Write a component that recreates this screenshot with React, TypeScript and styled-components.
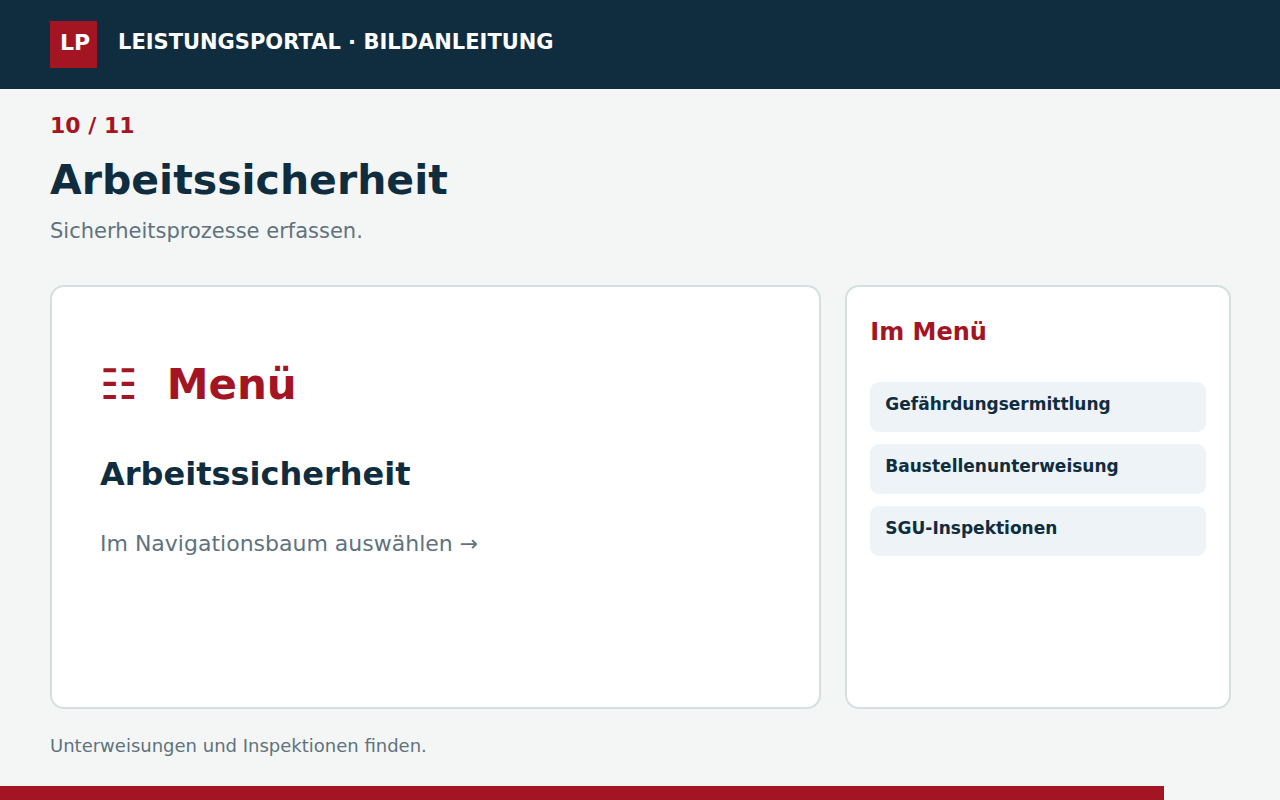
import React from "react";
import styled, { createGlobalStyle } from "styled-components";

const navy = "#102d40";
const red = "#a31522";
const slate = "#60727d";

const GlobalStyle = createGlobalStyle`
  * { box-sizing: border-box; }
  body { margin: 0; background: #f4f6f5; color: ${navy}; font-family: "DejaVu Sans", sans-serif; }
  h1, h2, h3, p, ul { margin: 0; padding: 0; }
`;

const Page = styled.div`
  min-height: 100vh;
  display: flex;
  flex-direction: column;
`;

const Header = styled.header`
  display: flex;
  align-items: center;
  gap: 21px;
  height: 89px;
  padding: 0 50px;
  background: ${navy};
  color: #fff;
  font-size: 22px;
  font-weight: 700;
  line-height: 26px;
`;

const Logo = styled.span`
  width: 47px;
  height: 47px;
  padding: 9px 10px;
  background: ${red};
`;

const HeaderTitle = styled.span`
  padding-bottom: 6px;
  font-size: 21px;
`;

const Main = styled.main`
  flex: 1;
  display: flex;
  flex-direction: column;
  padding: 24px 49px 29px 50px;
`;

const Counter = styled.p`
  color: ${red};
  font-size: 22px;
  font-weight: 700;
  line-height: 26px;
`;

const Title = styled.h1`
  margin-top: 16px;
  font-size: 41px;
  line-height: 50px;
`;

const Lead = styled.p`
  margin-top: 14px;
  color: ${slate};
  font-size: 21px;
  line-height: 24px;
`;

const Panels = styled.div`
  flex: 1;
  display: grid;
  grid-template-columns: 2fr 1fr;
  gap: 24px;
  margin-top: 42px;
`;

const Card = styled.section<{ $wide?: boolean }>`
  padding: ${(p) => (p.$wide ? "73px 48px" : "31px 23px")};
  border: 2px solid #d6dfe0;
  border-radius: 14px;
  background: #fff;
`;

const MenuHeading = styled.h2`
  display: flex;
  gap: 29px;
  color: ${red};
  font-size: 42px;
  line-height: 50px;
`;

const Destination = styled.h3`
  margin-top: 44px;
  font-size: 32px;
  line-height: 40px;
`;

const Hint = styled.p`
  margin-top: 36px;
  color: ${slate};
  font-size: 22px;
  line-height: 28px;
`;

const SideHeading = styled.h2`
  color: ${red};
  font-size: 24px;
  line-height: 28px;
`;

const Entries = styled.ul`
  display: flex;
  flex-direction: column;
  gap: 12px;
  margin-top: 36px;
  list-style: none;
`;

const Entry = styled.li`
  min-height: 50px;
  padding: 12px 15px;
  border-radius: 9px;
  background: #edf3f6;
  font-size: 17px;
  font-weight: 700;
  line-height: 20px;
`;

const Note = styled.p`
  margin-top: 26px;
  color: ${slate};
  font-size: 18px;
  line-height: 22px;
`;

const Progress = styled.div`
  height: 14px;
`;

const ProgressFill = styled.div`
  height: 100%;
  background: ${red};
`;

const entries = ["Gefährdungsermittlung", "Baustellenunterweisung", "SGU-Inspektionen"];
const step = 10;
const steps = 11;

export default function App() {
  return (
    <Page>
      <GlobalStyle />
      <Header>
        <Logo>LP</Logo>
        <HeaderTitle>LEISTUNGSPORTAL · BILDANLEITUNG</HeaderTitle>
      </Header>
      <Main>
        <Counter>{`${step} / ${steps}`}</Counter>
        <Title>Arbeitssicherheit</Title>
        <Lead>Sicherheitsprozesse erfassen.</Lead>
        <Panels>
          <Card $wide>
            <MenuHeading>
              <span>☷</span>
              <span>Menü</span>
            </MenuHeading>
            <Destination>Arbeitssicherheit</Destination>
            <Hint>Im Navigationsbaum auswählen →</Hint>
          </Card>
          <Card>
            <SideHeading>Im Menü</SideHeading>
            <Entries>
              {entries.map((entry) => (
                <Entry key={entry}>{entry}</Entry>
              ))}
            </Entries>
          </Card>
        </Panels>
        <Note>Unterweisungen und Inspektionen finden.</Note>
      </Main>
      <Progress>
        <ProgressFill style={{ width: `${(step / steps) * 100}%` }} />
      </Progress>
    </Page>
  );
}
